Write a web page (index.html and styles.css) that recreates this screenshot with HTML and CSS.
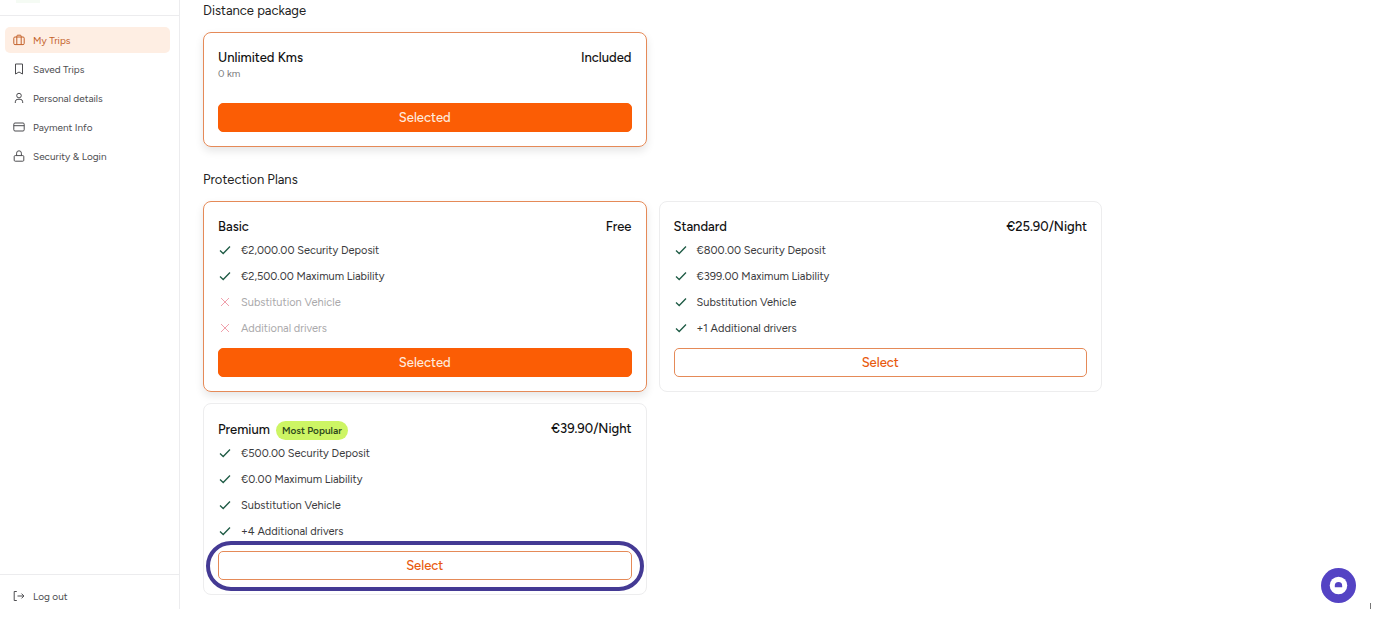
FILE: index.html
```html
<!DOCTYPE html>
<html lang="en">
<head>
    <meta charset="UTF-8">
    <meta name="viewport" content="width=device-width, initial-scale=1.0">
    <title>My Trips</title>
    <link rel="stylesheet" href="styles.css">
</head>
<body>
    <!-- shared icons -->
    <svg class="sprite" aria-hidden="true">
        <symbol id="check" viewBox="0 0 12 12"><path d="M1 6.5 4.2 9.5 11 2.5"/></symbol>
        <symbol id="cross" viewBox="0 0 12 12"><path d="M2 2l8 8M10 2l-8 8"/></symbol>
    </svg>

    <div class="layout">
        <aside class="sidebar">
            <div class="logo"><span></span></div>
            <nav>
                <a href="#" class="active">
                    <svg viewBox="0 0 12 12"><rect x="0.8" y="3" width="10.4" height="7.6" rx="1.2"/><path d="M3.8 10.5V2.2a1 1 0 0 1 1-1h2.4a1 1 0 0 1 1 1v8.3"/></svg>
                    My Trips
                </a>
                <a href="#">
                    <svg viewBox="0 0 12 12"><path d="M2.5 1h7v10L6 9 2.5 11z"/></svg>
                    Saved Trips
                </a>
                <a href="#">
                    <svg viewBox="0 0 12 12"><circle cx="6" cy="3.6" r="2.3"/><path d="M2.3 11V9.8a2.6 2.6 0 0 1 2.6-2.5h2.2a2.6 2.6 0 0 1 2.6 2.5V11"/></svg>
                    Personal details
                </a>
                <a href="#">
                    <svg viewBox="0 0 12 12"><rect x="0.8" y="2" width="10.4" height="8" rx="1.2"/><path d="M0.8 4.7h10.4"/></svg>
                    Payment Info
                </a>
                <a href="#">
                    <svg viewBox="0 0 12 12"><rect x="1.2" y="5.6" width="9.6" height="5.6" rx="1"/><path d="M3.6 5.5V3.2a2.4 2.4 0 0 1 4.8 0v2.3"/></svg>
                    Security &amp; Login
                </a>
            </nav>
            <div class="logout">
                <a href="#">
                    <svg viewBox="0 0 12 12"><path d="M3.8 1.5H1.2v9h2.6M4.5 6h6.3M8.5 3.6 10.9 6 8.5 8.4"/></svg>
                    Log out
                </a>
            </div>
        </aside>

        <main>
            <section>
                <h2>Distance package</h2>
                <div class="cards">
                    <article class="card selected">
                        <header><h3>Unlimited Kms</h3><span>Included</span></header>
                        <p class="note">0 km</p>
                        <button type="button" class="btn filled">Selected</button>
                    </article>
                </div>
            </section>

            <section>
                <h2>Protection Plans</h2>
                <div class="cards">
                    <article class="card selected">
                        <header><h3>Basic</h3><span>Free</span></header>
                        <ul>
                            <li><svg><use href="#check"/></svg>€2,000.00 Security Deposit</li>
                            <li><svg><use href="#check"/></svg>€2,500.00 Maximum Liability</li>
                            <li class="off"><svg><use href="#cross"/></svg>Substitution Vehicle</li>
                            <li class="off"><svg><use href="#cross"/></svg>Additional drivers</li>
                        </ul>
                        <button type="button" class="btn filled">Selected</button>
                    </article>

                    <article class="card">
                        <header><h3>Standard</h3><span>€25.90/Night</span></header>
                        <ul>
                            <li><svg><use href="#check"/></svg>€800.00 Security Deposit</li>
                            <li><svg><use href="#check"/></svg>€399.00 Maximum Liability</li>
                            <li><svg><use href="#check"/></svg>Substitution Vehicle</li>
                            <li><svg><use href="#check"/></svg>+1 Additional drivers</li>
                        </ul>
                        <button type="button" class="btn">Select</button>
                    </article>

                    <article class="card">
                        <header><h3>Premium <em class="badge">Most Popular</em></h3><span>€39.90/Night</span></header>
                        <ul>
                            <li><svg><use href="#check"/></svg>€500.00 Security Deposit</li>
                            <li><svg><use href="#check"/></svg>€0.00 Maximum Liability</li>
                            <li><svg><use href="#check"/></svg>Substitution Vehicle</li>
                            <li><svg><use href="#check"/></svg>+4 Additional drivers</li>
                        </ul>
                        <div class="highlight">
                            <button type="button" class="btn">Select</button>
                        </div>
                    </article>
                </div>
            </section>
        </main>
    </div>

    <button type="button" class="chat" aria-label="Open chat">
        <svg viewBox="0 0 36 36"><circle cx="18" cy="18" r="9" fill="#fff"/><path d="M14.2 19.8v-1.6a3.8 3.8 0 0 1 7.6 0v1.6z" fill="#5443c4"/></svg>
    </button>
    <span class="tick"></span>
</body>
</html>
```
FILE: styles.css
```css
* {
    box-sizing: border-box;
}

body {
    margin: 0;
    font-family: Figtree, Lato, sans-serif;
    font-size: 11px;
    color: #3a3a3c;
    background-color: #fff;
}

h2, h3, p, ul {
    margin: 0;
    padding: 0;
}

svg {
    width: 12px;
    height: 12px;
    flex: none;
    fill: none;
    stroke: currentColor;
    stroke-width: 1;
}

.sprite {
    display: none;
}

.layout {
    display: flex;
    min-height: 100vh;
    padding-bottom: 9px;
}

/* sidebar */
.sidebar {
    display: flex;
    flex-direction: column;
    width: 180px;
    flex: none;
    border-right: 1px solid #ececee;
}

.logo {
    height: 16px;
    padding-left: 16px;
    border-bottom: 1px solid #ececee;
}

.logo span {
    display: block;
    width: 24px;
    height: 3px;
    background-color: #f5fbf4;
}

nav {
    display: flex;
    flex-direction: column;
    gap: 3px;
    padding: 11px 9px 0 5px;
}

.sidebar a {
    display: flex;
    align-items: center;
    gap: 8px;
    height: 26px;
    padding: 0 8px;
    border-radius: 5px;
    font-size: 10px;
    color: #4d4d50;
    text-decoration: none;
}

.sidebar a.active {
    background-color: #feeee3;
    color: #c4622a;
}

.logout {
    margin-top: auto;
    padding: 8px 5px 0;
    border-top: 1px solid #ececee;
}

/* content */
main {
    flex: 1;
    max-width: 945px;
    padding: 0 23px;
}

section {
    margin-bottom: 22px;
}

section:last-child {
    margin-bottom: 0;
}

h2 {
    margin-bottom: 10px;
    font-size: 13px;
    font-weight: 400;
    line-height: 22px;
    color: #222;
}

.cards {
    display: grid;
    grid-template-columns: 1fr 1fr;
    gap: 11px 12px;
}

.card {
    padding: 14px;
    border: 1px solid #ededee;
    border-radius: 8px;
}

.card.selected {
    border-color: #e58a58;
    box-shadow: 0 4px 8px rgba(0, 0, 0, 0.1);
}

.card header {
    display: flex;
    justify-content: space-between;
    font-size: 13px;
    font-weight: 500;
    line-height: 21px;
    color: #111;
}

h3 {
    display: flex;
    align-items: center;
    gap: 6px;
    font-size: 13px;
    font-weight: 500;
}

.badge {
    margin-top: 3px;
    padding: 0 6px;
    border-radius: 10px;
    background-color: #cdf564;
    font-size: 10px;
    font-style: normal;
    font-weight: 600;
    line-height: 19px;
    color: #2f4a1c;
}

.note {
    margin-bottom: 23px;
    font-size: 10px;
    line-height: 12px;
    color: #77777a;
}

.card ul {
    margin-bottom: 7px;
    list-style: none;
}

.card li {
    display: flex;
    align-items: center;
    gap: 10px;
    height: 26px;
    padding-left: 1px;
}

.card li svg {
    color: #1f5b45;
    stroke-width: 1.3;
}

.card li.off {
    color: #aaa9ab;
}

.card li.off svg {
    color: #f0a0ac;
    stroke-width: 1;
}

.btn {
    display: block;
    width: 100%;
    height: 29px;
    border: 1px solid #e58a58;
    border-radius: 5px;
    background-color: #fff;
    font-family: inherit;
    font-size: 13px;
    font-weight: 500;
    color: #e8590c;
    cursor: pointer;
}

.btn.filled {
    border-color: #fb5d05;
    background-color: #fb5d05;
    color: #ffeadd;
}

/* ring drawn around the recommended action */
.highlight {
    position: relative;
}

.highlight::after {
    content: "";
    position: absolute;
    inset: -10px -12px -11px;
    border: 4px solid #443a94;
    border-radius: 25px;
    pointer-events: none;
}

.chat {
    position: fixed;
    right: 42px;
    bottom: 15px;
    width: 35px;
    height: 35px;
    padding: 0;
    border: none;
    border-radius: 50%;
    background-color: #5443c4;
    cursor: pointer;
}

.chat svg {
    display: block;
    width: 35px;
    height: 35px;
    stroke: none;
}

.tick {
    position: fixed;
    right: 27px;
    bottom: 9px;
    width: 1px;
    height: 6px;
    background-color: #777;
}
```
